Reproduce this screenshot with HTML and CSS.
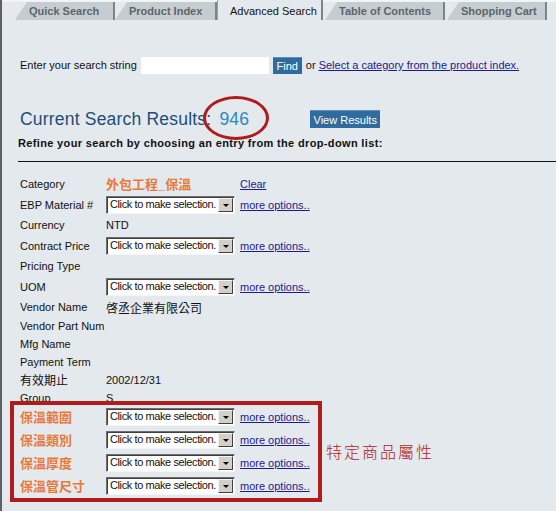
FILE: index.html
```html
<!DOCTYPE html>
<html lang="en">
<head>
  <meta charset="UTF-8" />
  <title>Advanced Search</title>
  <link rel="stylesheet" href="styles.css">
</head>
<body>
  <div class="page">
    <!-- Tabs -->
    <div class="tabs">
      <div class="tab t1">Quick Search</div>
      <div class="tab t2">Product Index</div>
      <div class="tab active">Advanced Search</div>
      <div class="tab t4">Table of Contents</div>
      <div class="tab t5">Shopping Cart</div>
    </div>

    <!-- Search row -->
    <div class="search-row">
      <span>Enter your search string</span>
      <input type="text" class="search-input">
      <button class="blue-btn find-btn">Find</button>
      <span>or <a href="#">Select a category from the product index.</a></span>
    </div>

    <!-- Results header -->
    <div class="results-row">
      <h1 class="results-title">Current Search Results<span class="count">: <b>946</b></span></h1>
      <button class="blue-btn view-btn">View Results</button>
    </div>
    <p class="refine">Refine your search by choosing an entry from the drop-down list:</p>
    <hr class="rule">

    <!-- Attributes -->
    <div class="attrs">
      <div class="row"><span class="label">Category</span><span class="cat">外包工程_保溫</span><a href="#" class="clear">Clear</a></div>
      <div class="row"><span class="label">EBP Material #</span><div class="sel">Click to make selection.<span class="arrow"></span></div><a href="#">more options..</a></div>
      <div class="row"><span class="label">Currency</span><span>NTD</span></div>
      <div class="row"><span class="label">Contract Price</span><div class="sel">Click to make selection.<span class="arrow"></span></div><a href="#">more options..</a></div>
      <div class="row"><span class="label">Pricing Type</span></div>
      <div class="row"><span class="label">UOM</span><div class="sel">Click to make selection.<span class="arrow"></span></div><a href="#">more options..</a></div>
      <div class="row"><span class="label">Vendor Name</span><span class="cjk">啓丞企業有限公司</span></div>
      <div class="row short first"><span class="label">Vendor Part Num</span></div>
      <div class="row short"><span class="label">Mfg Name</span></div>
      <div class="row short"><span class="label">Payment Term</span></div>
      <div class="row short"><span class="label cjk">有效期止</span><span>2002/12/31</span></div>
      <div class="row short"><span class="label">Group</span><span>S</span></div>
    </div>

    <div class="special">
      <div class="special-box">
        <div class="row tall"><span class="label orange">保溫範圍</span><div class="sel">Click to make selection.<span class="arrow"></span></div><a href="#">more options..</a></div>
        <div class="row tall"><span class="label orange">保溫類別</span><div class="sel">Click to make selection.<span class="arrow"></span></div><a href="#">more options..</a></div>
        <div class="row tall"><span class="label orange">保溫厚度</span><div class="sel">Click to make selection.<span class="arrow"></span></div><a href="#">more options..</a></div>
        <div class="row tall"><span class="label orange">保溫管尺寸</span><div class="sel">Click to make selection.<span class="arrow"></span></div><a href="#">more options..</a></div>
      </div>
      <div class="note">特定商品屬性</div>
    </div>
  </div>
</body>
</html>
```

FILE: styles.css
```css
/* BASE */
* { box-sizing: border-box; margin: 0; padding: 0; }
body {
  font-family: 'Liberation Sans', Arial, 'Noto Sans CJK TC', sans-serif;
  font-size: 11px;
  color: #111;
  background: #e3e9ec;
}
a { color: #1c1c8c; }
.page {
  min-height: 511px;
  border-left: 2px solid #5d6164;
  padding-left: 1px;
  background: #e3e9ec;
}

/* TABS */
.tabs {
  display: flex;
  height: 20px;
  padding: 2px 0 0 12px;
  background: linear-gradient(#f2f5f6 0 2px, #e3e9ec 2px);
}
.tab {
  height: 18px;
  line-height: 18px;
  font-weight: bold;
  color: #5b666c;
  background: #c5cdd0;
  border-right: 2px solid #7d8488;
  padding-left: 14px;
  clip-path: polygon(12px 0, 100% 0, 100% 100%, 0 100%);
  white-space: nowrap;
}
.t1 { width: 100px; }
.t2 { width: 102px; }
.t4 { width: 120px; margin-left: 2px; }
.t5 { width: 100px; margin-left: 2px; }
.tab.active {
  width: 106px;
  background: #e3e9ec;
  color: #111;
  font-weight: normal;
  clip-path: none;
  padding-left: 12px;
  border-left: 1px solid #9aa1a4;
  border-right: 2px solid #7d8488;
  height: 20px;
  margin-top: -2px;
  line-height: 22px;
}

/* SEARCH */
.search-row {
  display: flex;
  align-items: center;
  margin-top: 36px;
  padding-left: 17px;
  height: 18px;
}
.search-input {
  width: 128px;
  height: 17px;
  margin: 0 4px 0 4px;
  border: none;
  background: #fff;
}
.blue-btn {
  font-family: inherit;
  font-size: 11px;
  color: #fff;
  background: #2f6b9c;
  border: none;
  border-top: 1px solid #5d8fba;
  height: 17px;
}
.find-btn { width: 29px; margin-right: 4px; }

/* RESULTS */
.results-row {
  display: flex;
  align-items: flex-end;
  margin-top: 29px;
  padding-left: 17px;
  height: 28px;
}
.results-title {
  font-size: 17.5px;
  font-weight: normal;
  color: #1f4e78;
  line-height: 24px;
  letter-spacing: 0.2px;
  white-space: nowrap;
}
.count { position: relative; word-spacing: 3px; }
.count b { font-weight: normal; color: #2b88c4; }
.count::after {
  content: '';
  position: absolute;
  left: -3px;
  top: -13px;
  width: 60px;
  height: 38px;
  border: 3px solid #b01c1c;
  border-radius: 50%;
}
.view-btn {
  width: 70px;
  height: 18px;
  margin: 0 0 3px 61px;
}
.refine {
  font-weight: bold;
  padding-left: 15px;
  margin-top: 5px;
  line-height: 14px;
  letter-spacing: 0.35px;
}
.rule {
  border: none;
  border-top: 1px solid #111;
  margin: 11px 0 0 15px;
}

/* ATTRIBUTES */
.attrs { margin-top: 12px; padding-left: 17px; }
.row {
  display: flex;
  align-items: center;
  height: 20.5px;
  white-space: nowrap;
}
.row.short { height: 18px; }
.row.short.first { height: 17px; }
.row.tall { height: 23px; }
.label { width: 86px; flex: none; }
.cjk { font-size: 12px; }
.cat, .orange {
  color: #e8793a;
  font-weight: bold;
  font-size: 13px;
  line-height: 17px;
}
.cat { width: 134px; }
.sel {
  position: relative;
  width: 129px;
  height: 18px;
  line-height: 15px;
  padding-left: 3px;
  margin-right: 5px;
  letter-spacing: -0.4px;
  background: #fff;
  border: 1px solid;
  border-color: #6e6e6e #f5f5f5 #f5f5f5 #6e6e6e;
  box-shadow: inset 1px 1px 0 #404040;
  overflow: hidden;
}
.arrow {
  position: absolute;
  right: 1px;
  top: 1px;
  width: 15px;
  height: 14px;
  background: #d4d0c8;
  border: 1px solid;
  border-color: #f4f4f4 #404040 #404040 #f4f4f4;
}
.arrow::after {
  content: '';
  position: absolute;
  left: 4px;
  top: 5px;
  border-left: 3px solid transparent;
  border-right: 3px solid transparent;
  border-top: 3px solid #000;
}

/* SPECIAL ATTRIBUTES */
.special {
  display: flex;
  align-items: center;
  margin-top: -6px;
  padding-left: 7px;
}
.special-box {
  width: 312px;
  border: 4px solid #b01c1c;
  padding: 1px 0 0 6px;
}
.note {
  margin-left: 4px;
  margin-top: 0;
  font-family: 'Noto Sans CJK TC', sans-serif;
  font-weight: 300;
  font-size: 16px;
  letter-spacing: 2px;
  color: #b02222;
}
```
